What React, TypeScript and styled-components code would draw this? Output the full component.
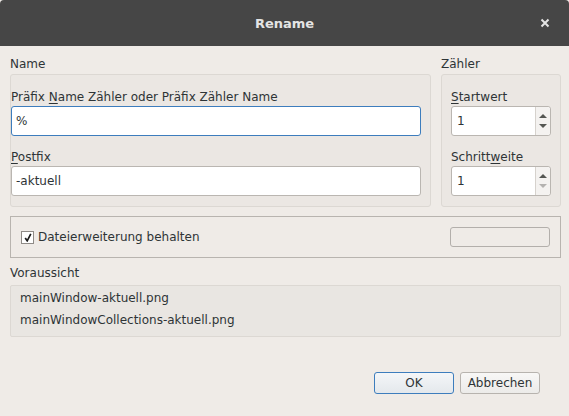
import React from "react";
import styled, {createGlobalStyle} from "styled-components";

const GlobalStyle = createGlobalStyle`
  html, body {
    margin: 0;
    padding: 0;
    background: #efebe7;
  }
  body {
    font-family: "DejaVu Sans", "Noto Sans", sans-serif;
    font-size: 12px;
    color: #2e3436;
  }
`;

const Window = styled.div`
  width: 569px;
  height: 416px;
  display: flex;
  flex-direction: column;
  background: #efebe7;
  overflow: hidden;
`;

const TitleBar = styled.div`
  height: 46px;
  flex: none;
  display: flex;
  align-items: center;
  justify-content: center;
  position: relative;
  background: #464646;
  border-radius: 4px 4px 0 0;
  color: #e4e4e4;
  font-weight: bold;
  font-size: 13px;
`;

const CloseButton = styled.div`
  position: absolute;
  right: 19px;
  top: 18px;
  width: 10px;
  height: 10px;
  display: flex;
`;

const Body = styled.div`
  flex: 1;
  display: flex;
  flex-direction: column;
  padding: 10px 8px 0 10px;
`;

const TopRow = styled.div`
  display: grid;
  grid-template-columns: 421px 120px;
  column-gap: 10px;
`;

const Section = styled.div`
  display: flex;
  flex-direction: column;
`;

const SectionTitle = styled.div`
  height: 16px;
  line-height: 16px;
  margin-bottom: 2px;
`;

const GroupBox = styled.div<{$pad: string}>`
  display: flex;
  flex-direction: column;
  padding: ${(p) => p.$pad};
  background: #ebe7e3;
  border: 1px solid #dcd8d3;
  border-radius: 3px;
  height: 133px;
  box-sizing: border-box;
`;

const FieldLabel = styled.div<{$first?: boolean}>`
  height: 16px;
  line-height: 16px;
  margin-top: ${(p) => (p.$first ? "0" : "13px")};
  margin-bottom: 1px;
  white-space: nowrap;
`;

const Key = styled.span`
  text-decoration: underline;
  text-underline-offset: 2px;
`;

const TextInput = styled.div<{$focused?: boolean}>`
  height: 30px;
  box-sizing: border-box;
  display: flex;
  align-items: center;
  padding-left: 4px;
  background: #ffffff;
  border: 1px solid ${(p) => (p.$focused ? "#3d7dbd" : "#bab6b1")};
  border-radius: 3px;
`;

const SpinBox = styled.div`
  height: 30px;
  width: 100px;
  box-sizing: border-box;
  display: flex;
  background: #ffffff;
  border: 1px solid #bab6b1;
  border-radius: 3px;
`;

const SpinValue = styled.div`
  flex: 1;
  display: flex;
  align-items: center;
  padding-left: 5px;
`;

const SpinArrows = styled.div`
  width: 14px;
  border-left: 1px solid #d6d2cd;
  background: #f4f2f0;
  border-radius: 0 3px 3px 0;
  display: flex;
  flex-direction: column;
  align-items: center;
  justify-content: center;
  gap: 6px;
`;

const Arrow = styled.div<{$down?: boolean; $disabled?: boolean}>`
  width: 0;
  height: 0;
  border-left: 4px solid transparent;
  border-right: 4px solid transparent;
  ${(p) =>
    p.$down
      ? `border-top: 4px solid ${p.$disabled ? "#b4b2b0" : "#555753"};`
      : `border-bottom: 4px solid ${p.$disabled ? "#b4b2b0" : "#555753"};`}
`;

const OptionsBox = styled.div`
  margin-top: 9px;
  height: 42px;
  box-sizing: border-box;
  border: 1px solid #b8b4af;
  display: flex;
  align-items: center;
  justify-content: space-between;
  padding: 0 10px 0 10px;
`;

const CheckRow = styled.label`
  display: flex;
  align-items: center;
  gap: 4px;
`;

const CheckBox = styled.div`
  width: 11px;
  height: 11px;
  border: 1px solid #8f8b87;
  background: #ffffff;
  display: flex;
  align-items: center;
  justify-content: center;
`;

const EmptyButton = styled.div`
  width: 100px;
  height: 20px;
  box-sizing: border-box;
  border: 1px solid #b3afab;
  border-radius: 3px;
  background: #efebe7;
`;

const PreviewTitle = styled.div`
  margin-top: 7px;
  height: 16px;
  line-height: 16px;
`;

const PreviewBox = styled.div`
  margin-top: 4px;
  height: 52px;
  box-sizing: border-box;
  padding: 1px 9px 0;
  background: #e9e6e2;
  border: 1px solid #dcd8d3;
  border-radius: 2px;
`;

const PreviewLine = styled.div`
  height: 22px;
  line-height: 22px;
  white-space: nowrap;
`;

const ButtonRow = styled.div`
  margin-top: 35px;
  display: flex;
  justify-content: flex-end;
  gap: 6px;
  padding-right: 21px;
`;

const Button = styled.div<{$default?: boolean}>`
  width: 80px;
  height: 22px;
  box-sizing: border-box;
  display: flex;
  align-items: center;
  justify-content: center;
  border: 1px solid ${(p) => (p.$default ? "#3d7dbd" : "#b7b3ae")};
  border-radius: 3px;
  background: ${(p) =>
    p.$default
      ? "linear-gradient(#f4f6f8, #e4e8ec)"
      : "linear-gradient(#f8f7f6, #ecebe9)"};
`;

export default function App() {
  return (
    <>
      <GlobalStyle />
      <Window>
        <TitleBar>
          Rename
          <CloseButton>
            <svg width="10" height="10" viewBox="0 0 10 10">
              <path
                d="M1.5 1.5 L8.5 8.5 M8.5 1.5 L1.5 8.5"
                stroke="#e4e4e4"
                strokeWidth="2"
              />
            </svg>
          </CloseButton>
        </TitleBar>
        <Body>
          <TopRow>
            <Section>
              <SectionTitle>Name</SectionTitle>
              <GroupBox $pad="14px 9px 0 0">
                <FieldLabel $first>
                  Präfix <Key>N</Key>ame Zähler oder Präfix Zähler Name
                </FieldLabel>
                <TextInput $focused>%</TextInput>
                <FieldLabel>
                  <Key>P</Key>ostfix
                </FieldLabel>
                <TextInput>-aktuell</TextInput>
              </GroupBox>
            </Section>
            <Section>
              <SectionTitle>Zähler</SectionTitle>
              <GroupBox $pad="14px 9px 0 9px">
                <FieldLabel $first>
                  <Key>S</Key>tartwert
                </FieldLabel>
                <SpinBox>
                  <SpinValue>1</SpinValue>
                  <SpinArrows>
                    <Arrow />
                    <Arrow $down />
                  </SpinArrows>
                </SpinBox>
                <FieldLabel>
                  Schritt<Key>w</Key>eite
                </FieldLabel>
                <SpinBox>
                  <SpinValue>1</SpinValue>
                  <SpinArrows>
                    <Arrow />
                    <Arrow $down $disabled />
                  </SpinArrows>
                </SpinBox>
              </GroupBox>
            </Section>
          </TopRow>
          <OptionsBox>
            <CheckRow>
              <CheckBox>
                <svg width="8" height="9" viewBox="0 0 8 9">
                  <path
                    d="M1.2 5 L3.2 7.8 L6.8 0.8"
                    stroke="#1a1a1a"
                    strokeWidth="1.7"
                    fill="none"
                  />
                </svg>
              </CheckBox>
              Dateierweiterung behalten
            </CheckRow>
            <EmptyButton />
          </OptionsBox>
          <PreviewTitle>Voraussicht</PreviewTitle>
          <PreviewBox>
            <PreviewLine>mainWindow-aktuell.png</PreviewLine>
            <PreviewLine>mainWindowCollections-aktuell.png</PreviewLine>
          </PreviewBox>
          <ButtonRow>
            <Button $default>OK</Button>
            <Button>Abbrechen</Button>
          </ButtonRow>
        </Body>
      </Window>
    </>
  );
}
